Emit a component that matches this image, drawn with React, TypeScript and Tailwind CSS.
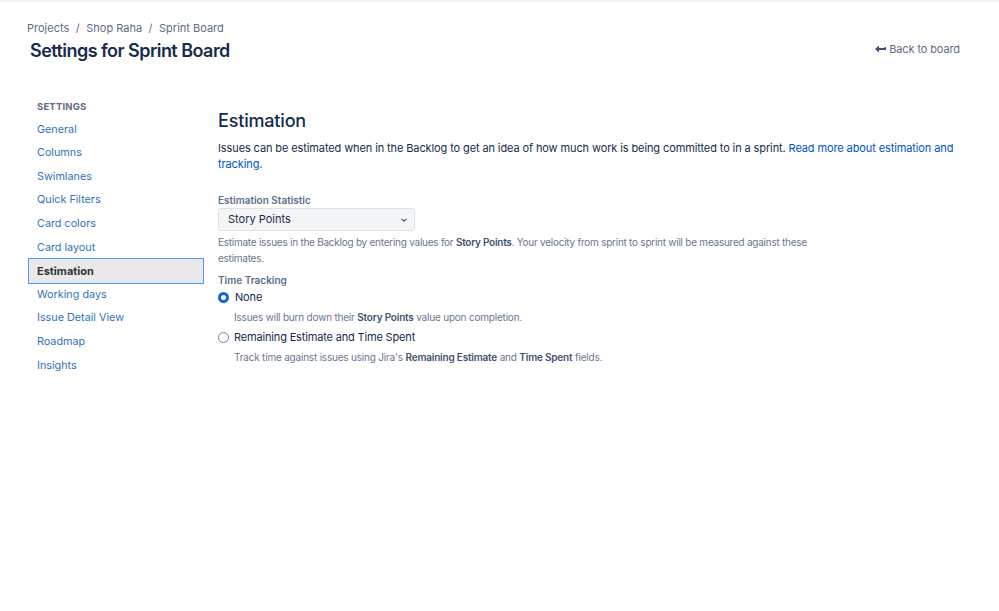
import React from "react";

const items = [
  "General",
  "Columns",
  "Swimlanes",
  "Quick Filters",
  "Card colors",
  "Card layout",
  "Estimation",
  "Working days",
  "Issue Detail View",
  "Roadmap",
  "Insights",
];

export default function App() {
  return (
    <div
      className="w-[999px] h-[611px] bg-white border-t-2 border-[#f1f1f1] overflow-hidden"
      style={{ fontFamily: "Inter, 'Noto Sans', sans-serif" }}
    >
      <div className="flex items-start justify-between pl-[27px] pr-[39px] pt-[17px]">
        <div>
          <div className="text-[11px] leading-[18px] text-[#5e6c84] flex gap-[6.5px]">
            <span>Projects</span>
            <span>/</span>
            <span>Shop Raha</span>
            <span>/</span>
            <span>Sprint Board</span>
          </div>
          <h1 className="mt-[1px] ml-[3px] text-[18px] leading-[26px] font-semibold text-[#172b4d] tracking-[-0.03em]">
            Settings for Sprint Board
          </h1>
        </div>
        <div className="mt-[21px] flex items-center gap-[3px] text-[11px] leading-[18px] text-[#5e6c84] tracking-[-0.01em]">
          <svg width="11" height="8" viewBox="0 0 11 8">
            <polygon points="0,4 4,0.5 4,7.5" fill="#42526e" />
            <rect x="3" y="3" width="8" height="2" fill="#42526e" />
            <rect x="9.5" y="2" width="1.5" height="3" fill="#42526e" />
          </svg>
          <span>Back to board</span>
        </div>
      </div>

      <div className="flex mt-[34px]">
        <div className="w-[176px] ml-[28px] mt-[2px] shrink-0">
          <div className="pl-[9px] text-[9.5px] leading-[14px] font-bold tracking-[0.02em] text-[#5e6c84]">
            SETTINGS
          </div>
          <div className="mt-[4px] flex flex-col">
            {items.map((it) =>
              it === "Estimation" ? (
                <div
                  key={it}
                  className="h-[26px] -my-[1.2px] flex items-center pl-[8px] bg-[#e9e9e9] border border-[#4c9aff] text-[11px] font-bold text-[#333333]"
                >
                  {it}
                </div>
              ) : (
                <div
                  key={it}
                  className="h-[23.6px] flex items-center pl-[9px] text-[10.8px] text-[#3572b0]"
                >
                  {it}
                </div>
              )
            )}
          </div>
        </div>

        <div className="ml-[14px] flex-1 pr-[40px]">
          <h2 className="mt-[9px] text-[18px] leading-[28px] font-medium text-[#172b4d] tracking-[-0.01em]">
            Estimation
          </h2>
          <p className="mt-[5px] text-[11px] leading-[16px] text-[#172b4d] tracking-[-0.01em]">
            Issues can be estimated when in the Backlog to get an idea of how
            much work is being committed to in a sprint.{" "}
            <span className="text-[#0052cc]">
              Read more about estimation and tracking.
            </span>
          </p>

          <div className="mt-[21px] text-[10px] leading-[14px] font-semibold text-[#5e6c84]">
            Estimation Statistic
          </div>
          <div className="mt-[1px] w-[197px] h-[23px] rounded-[3px] bg-[#f4f5f7] border border-[#dfe1e6] flex items-center justify-between pl-[9px] pr-[5px]">
            <span className="text-[11px] text-[#172b4d]">Story Points</span>
            <svg width="10" height="10" viewBox="0 0 10 10">
              <path d="M2.5 3.8 L5 6.2 L7.5 3.8" fill="none" stroke="#42526e" strokeWidth="1.1" />
            </svg>
          </div>
          <p className="mt-[3px] w-[600px] text-[10px] leading-[16px] text-[#6b778c] tracking-[-0.025em]">
            Estimate issues in the Backlog by entering values for{" "}
            <b className="font-semibold text-[#42526e]">Story Points</b>. Your
            velocity from sprint to sprint will be measured against these
            estimates.
          </p>

          <div className="mt-[7px] text-[10px] leading-[14px] font-semibold text-[#5e6c84]">
            Time Tracking
          </div>
          <div className="mt-[1px] flex items-center gap-[6px] h-[18px]">
            <span className="w-[11px] h-[11px] rounded-full border-[3.5px] border-[#0c66e4] bg-white" />
            <span className="text-[11px] text-[#172b4d] tracking-[-0.015em]">None</span>
          </div>
          <div className="pl-[16px] mt-[3px] text-[10px] leading-[16px] text-[#6b778c] tracking-[-0.02em]">
            Issues will burn down their{" "}
            <b className="font-semibold text-[#42526e]">Story Points</b> value upon
            completion.
          </div>
          <div className="mt-[2px] flex items-center gap-[5px] h-[20px]">
            <span className="w-[11px] h-[11px] rounded-full border border-[#7a869a] bg-white" />
            <span className="text-[11px] text-[#172b4d] tracking-[-0.015em]">
              Remaining Estimate and Time Spent
            </span>
          </div>
          <div className="pl-[16px] mt-[2px] text-[10px] leading-[16px] text-[#6b778c] tracking-[-0.02em]">
            Track time against issues using Jira's{" "}
            <b className="font-semibold text-[#42526e]">Remaining Estimate</b> and{" "}
            <b className="font-semibold text-[#42526e]">Time Spent</b> fields.
          </div>
        </div>
      </div>
    </div>
  );
}
